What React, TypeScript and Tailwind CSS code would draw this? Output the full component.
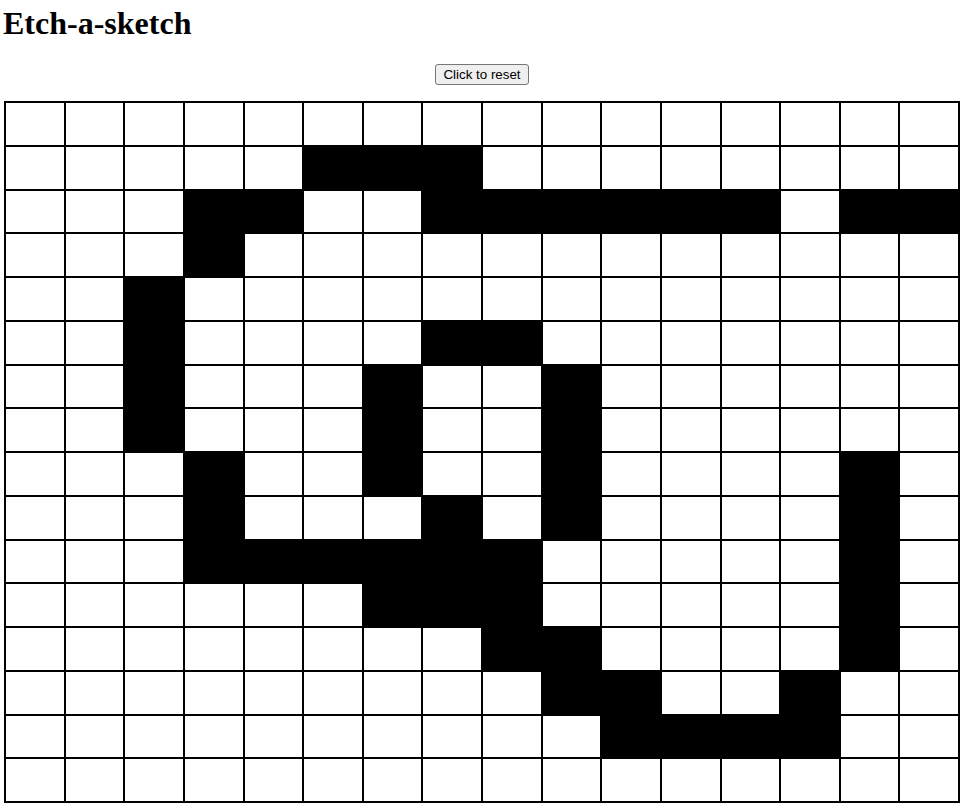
import React from "react";

const black: Record<number, number[]> = {
  1: [5, 6, 7],
  2: [3, 4, 7, 8, 9, 10, 11, 12, 14, 15],
  3: [3],
  4: [2],
  5: [2, 7, 8],
  6: [2, 6, 9],
  7: [2, 6, 9],
  8: [3, 6, 9, 14],
  9: [3, 7, 9, 14],
  10: [3, 4, 5, 6, 7, 8, 14],
  11: [6, 7, 8, 14],
  12: [8, 9, 14],
  13: [9, 10, 13],
  14: [10, 11, 12, 13],
};

export default function App() {
  const cells = [];
  for (let r = 0; r < 16; r++) {
    for (let c = 0; c < 16; c++) {
      const on = (black[r] || []).includes(c);
      cells.push(
        <div
          key={`${r}-${c}`}
          className={on ? "border border-black bg-black" : "border border-black bg-white"}
        />
      );
    }
  }
  return (
    <div className="min-h-[812px] w-[974px] bg-white text-black">
      <h1 className="m-0 pl-[3px] pt-[5px] text-[32px] font-bold leading-[37px] [font-family:'Liberation_Serif',serif]">
        Etch-a-sketch
      </h1>
      <div className="mt-[22px] flex w-[964px] justify-center">
        <button className="h-[21px] rounded-[3px] border border-[#767676] bg-[#efefef] px-[7px] text-[13.333px] leading-[15px] text-black [font-family:'Liberation_Sans',Arial,sans-serif]">
          Click to reset
        </button>
      </div>
      <div className="ml-[4px] mt-[16px] grid h-[702px] w-[956px] grid-cols-16 grid-rows-16 border border-black">
        {cells}
      </div>
    </div>
  );
}
